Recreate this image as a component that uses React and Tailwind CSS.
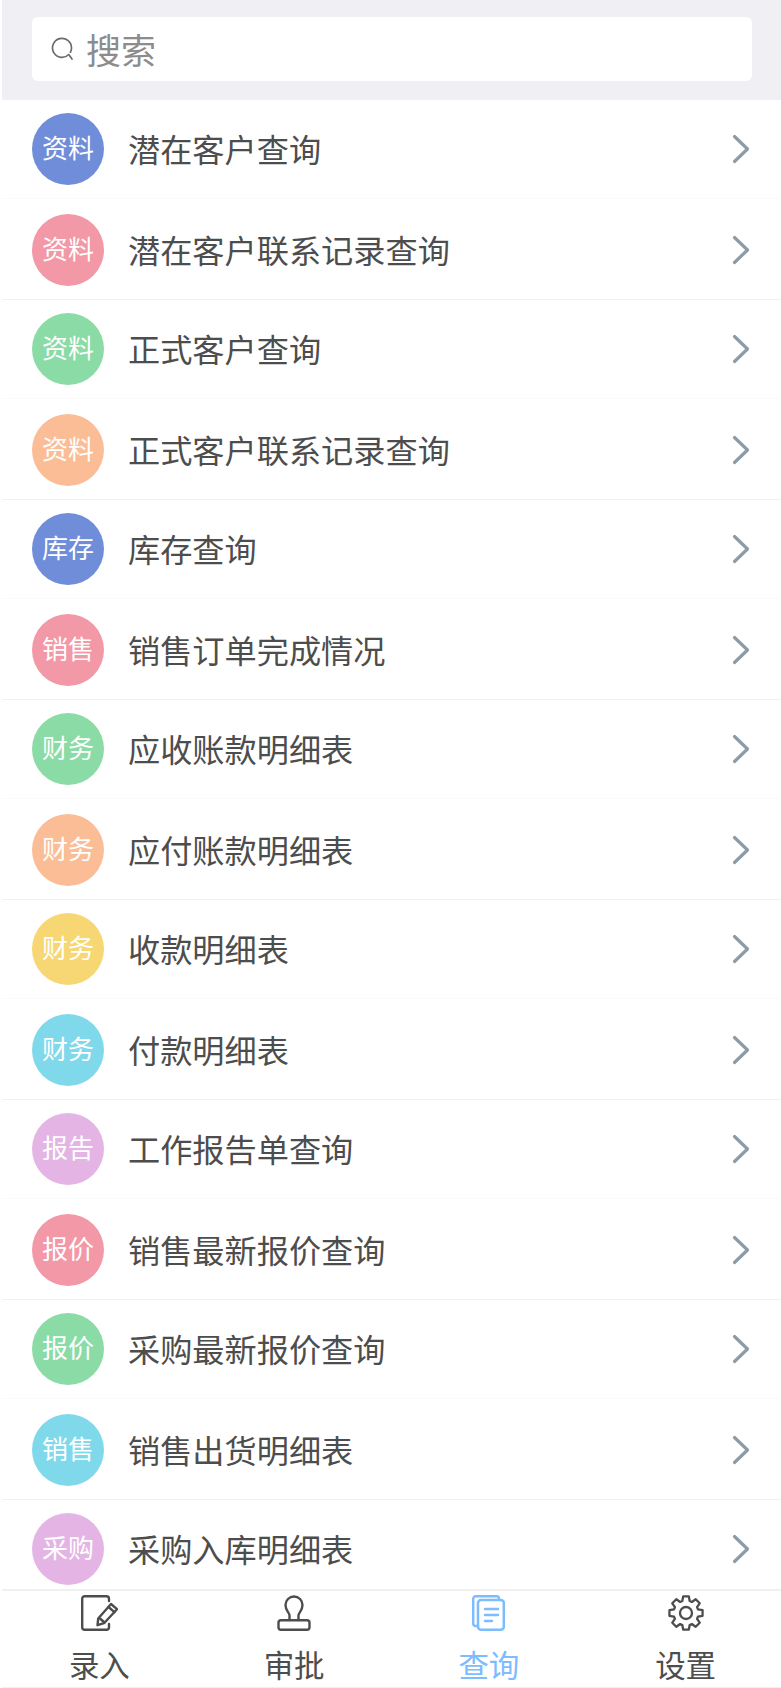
import React from 'react';

const BLUE = 'bg-[#6f8dd9]';
const PINK = 'bg-[#f298a6]';
const GREEN = 'bg-[#8adba6]';
const ORANGE = 'bg-[#fbbd96]';
const YELLOW = 'bg-[#f7d774]';
const CYAN = 'bg-[#80d9ea]';
const PURPLE = 'bg-[#e4b5e4]';

const rows = [
  { tag: '资料', color: BLUE, name: '潜在客户查询' },
  { tag: '资料', color: PINK, name: '潜在客户联系记录查询' },
  { tag: '资料', color: GREEN, name: '正式客户查询' },
  { tag: '资料', color: ORANGE, name: '正式客户联系记录查询' },
  { tag: '库存', color: BLUE, name: '库存查询' },
  { tag: '销售', color: PINK, name: '销售订单完成情况' },
  { tag: '财务', color: GREEN, name: '应收账款明细表' },
  { tag: '财务', color: ORANGE, name: '应付账款明细表' },
  { tag: '财务', color: YELLOW, name: '收款明细表' },
  { tag: '财务', color: CYAN, name: '付款明细表' },
  { tag: '报告', color: PURPLE, name: '工作报告单查询' },
  { tag: '报价', color: PINK, name: '销售最新报价查询' },
  { tag: '报价', color: GREEN, name: '采购最新报价查询' },
  { tag: '销售', color: CYAN, name: '销售出货明细表' },
  { tag: '采购', color: PURPLE, name: '采购入库明细表' },
];

const EntryIcon = () => (
  <svg width="37" height="36" viewBox="0 0 37 36" fill="none" stroke="currentColor" strokeWidth="2.4" strokeLinecap="round" strokeLinejoin="round">
    <path d="M28 6V3.700a2.500 2.500 0 0 0-2.500-2.500H3.700a2.500 2.500 0 0 0-2.500 2.500v28.600a2.500 2.500 0 0 0 2.500 2.500h21.800a2.500 2.500 0 0 0 2.500-2.500V29" />
    <path d="M30 9l6 5.200-13 14-6.500 2 .7-6.700z" />
    <path d="M27.500 12l6 5.200M19 23.500l4.500 4" />
  </svg>
);

const ApproveIcon = () => (
  <svg width="34" height="36" viewBox="0 0 34 36" fill="none" stroke="currentColor" strokeWidth="2.4" strokeLinecap="round" strokeLinejoin="round">
    <path d="M12.500 25v-4.500c0-3-4-4.500-4-10.500a8.500 8.500 0 0 1 17 0c0 6-4 7.500-4 10.500V25" />
    <rect x="1.500" y="25.200" width="31" height="9.600" rx="2.500" />
  </svg>
);

const QueryIcon = () => (
  <svg width="33" height="36" viewBox="0 0 33 36" fill="none" stroke="currentColor" strokeWidth="2.5" strokeLinecap="round" strokeLinejoin="round">
    <path d="M27 4.500V3.500a2.200 2.200 0 0 0-2.200-2.200H3.700a2.500 2.500 0 0 0-2.500 2.500v24.700a2.500 2.500 0 0 0 2.500 2.500h2.300" />
    <rect x="6" y="5" width="25.800" height="29.800" rx="3" />
    <path d="M13 14h13M13 20h13M13 26h7" />
  </svg>
);

// outline of an 8 tooth gear, centred at 18,18
const gearPath = () => {
  const pts = [];
  for (let i = 0; i < 8; i++) {
    const a = (i * Math.PI) / 4 - Math.PI / 2;
    [[-0.3, 12.5], [-0.17, 16.8], [0.17, 16.8], [0.3, 12.5]].forEach(([d, r]) => {
      pts.push(`${(18 + r * Math.cos(a + d)).toFixed(2)} ${(18 + r * Math.sin(a + d)).toFixed(2)}`);
    });
  }
  return `M${pts.join('L')}Z`;
};

const SettingsIcon = () => (
  <svg width="36" height="36" viewBox="0 0 36 36" fill="none" stroke="currentColor" strokeWidth="2.300" strokeLinecap="round" strokeLinejoin="round">
    <path d={gearPath()} />
    <circle cx="18" cy="18" r="6" />
  </svg>
);

const tabs = [
  { label: '录入', icon: <EntryIcon /> },
  { label: '审批', icon: <ApproveIcon /> },
  { label: '查询', icon: <QueryIcon />, active: true },
  { label: '设置', icon: <SettingsIcon />, nudge: true },
];

export default function App() {
  return (
    <div className="h-[1688px] flex flex-col overflow-hidden bg-white pl-[2px] font-['Noto_Sans_CJK_SC',sans-serif] text-[#4d4d4d]">
      {/* SEARCH */}
      <div className="h-[100px] shrink-0 bg-[#efeff4] pl-[30px] pr-[29px] pt-[17px]">
        <div className="h-[64px] rounded-[6px] bg-white flex items-center pl-[19px] text-[#8c8c8c]">
          <svg width="24" height="24" viewBox="0 0 24 24" fill="none" stroke="#6b6b6b" strokeWidth="1.700" strokeLinecap="round">
            <path d="M17.800 17.500A9.500 9.500 0 1 1 20.500 11a9.500 9.500 0 0 1-1 4.200" />
            <path d="M18.500 18.500l2.500 3.500" />
          </svg>
          <span className="ml-[11px] pb-[2px] text-[35px] leading-none">搜索</span>
        </div>
      </div>

      {/* LIST */}
      <div className="flex-1 min-h-0 overflow-hidden">
        {rows.map((row, i) => (
          <div
            key={i}
            className={`flex items-center pl-[30px] pr-[31px] border-b ${i % 2 === 0 ? 'h-[99px] border-[#fafafa]' : 'h-[101px] pt-[2px] border-[#f0f0f0]'}`}
          >
            <div className={`w-[72px] h-[72px] pb-[6px] rounded-full shrink-0 flex items-center justify-center text-white text-[26px] ${row.color}`}>
              {row.tag}
            </div>
            <span className="ml-[24px] pb-[2px] flex-1 text-[32.2px] leading-none">{row.name}</span>
            <svg width="18" height="30" viewBox="0 0 18 30" fill="none" stroke="#8b9ca8" strokeWidth="3.200" strokeLinecap="round" strokeLinejoin="round">
              <path d="M2.500 2.500L15.500 15L2.500 27.500" />
            </svg>
          </div>
        ))}
      </div>

      {/* TABS */}
      <div className="h-[99px] shrink-0 grid grid-cols-4 border-t-2 border-b border-[#f0f0f0] bg-white">
        {tabs.map((tab) => (
          <div key={tab.label} className={`flex flex-col items-center pt-[4px] ${tab.active ? 'text-[#7cbcff]' : ''} ${tab.nudge ? 'pl-[4px]' : ''}`}>
            <div className="h-[38px]">{tab.icon}</div>
            <span className="mt-[11px] text-[30.5px] leading-[40px]">{tab.label}</span>
          </div>
        ))}
      </div>
    </div>
  );
}
